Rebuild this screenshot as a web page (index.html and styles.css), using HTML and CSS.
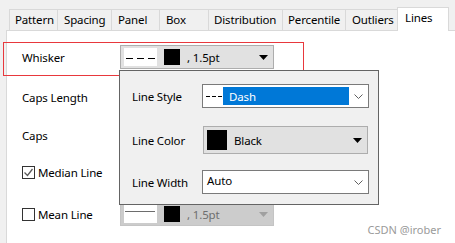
FILE: index.html
```html
<!DOCTYPE html>
<html lang="en">

<head>
    <meta charset="UTF-8">
    <title>Box Chart - Lines</title>
    <link rel="stylesheet" href="styles.css">
</head>

<body>
    <div class="window">
        <div class="tabs">
            <div class="tab tab-pattern">Pattern</div>
            <div class="tab tab-spacing">Spacing</div>
            <div class="tab tab-panel">Panel</div>
            <div class="tab tab-box">Box</div>
            <div class="tab tab-distribution">Distribution</div>
            <div class="tab tab-percentile">Percentile</div>
            <div class="tab tab-outliers">Outliers</div>
            <div class="tab tab-lines active">Lines</div>
        </div>

        <div class="panel">
            <!-- Whisker row, marked with the red box -->
            <div class="row row-whisker">
                <span class="label">Whisker</span>
                <div class="combo line-combo">
                    <span class="sample">
                        <svg width="33" height="18"><line x1="2" y1="10.5" x2="31" y2="10.5" stroke="#000" stroke-width="1" stroke-dasharray="7 4" /></svg>
                    </span>
                    <span class="swatch"></span>
                    <span class="combo-text">, 1.5pt</span>
                    <svg class="tri" width="9" height="5"><polygon points="0,0 9,0 4.5,5" fill="#000" /></svg>
                </div>
            </div>

            <div class="row row-caps-length">
                <span class="label">Caps Length</span>
            </div>

            <div class="row row-caps">
                <span class="label">Caps</span>
            </div>

            <div class="row row-median">
                <label class="check">
                    <span class="box">
                        <svg width="11" height="11"><polyline points="1.5,5.5 4.5,8.5 9.5,2" fill="none" stroke="#5a5a5a" stroke-width="1.3" /></svg>
                    </span>
                    Median Line
                </label>
            </div>

            <div class="row row-mean">
                <label class="check">
                    <span class="box"></span>
                    Mean Line
                </label>
                <div class="combo line-combo disabled">
                    <span class="sample">
                        <svg width="32" height="18"><line x1="1" y1="6.5" x2="31" y2="6.5" stroke="#6d6d6d" stroke-width="1" /></svg>
                    </span>
                    <span class="swatch"></span>
                    <span class="combo-text">, 1.5pt</span>
                    <svg class="tri" width="9" height="5"><polygon points="0,0 9,0 4.5,5" fill="#a0a0a0" /></svg>
                </div>
            </div>
        </div>

        <!-- Drop-down editor opened from the Whisker combo -->
        <div class="popup">
            <div class="popup-row row-style">
                <span class="label">Line Style</span>
                <div class="field">
                    <div class="selected">
                        <span class="mini-sample">
                            <svg width="18" height="18"><line x1="1" y1="9.5" x2="17" y2="9.5" stroke="#000" stroke-width="1" stroke-dasharray="4 2" /></svg>
                        </span>
                        <span>Dash</span>
                    </div>
                    <svg class="chevron" width="9" height="5"><polyline points="0.5,0.5 4.5,4.5 8.5,0.5" fill="none" stroke="#606060" stroke-width="1" /></svg>
                </div>
            </div>

            <div class="popup-row row-color">
                <span class="label">Line Color</span>
                <div class="combo color-combo">
                    <span class="swatch big"></span>
                    <span class="combo-text">Black</span>
                    <svg class="tri" width="9" height="5"><polygon points="0,0 9,0 4.5,5" fill="#000" /></svg>
                </div>
            </div>

            <div class="popup-row row-width">
                <span class="label">Line Width</span>
                <div class="field">
                    <span class="field-text">Auto</span>
                    <svg class="chevron" width="9" height="5"><polyline points="0.5,0.5 4.5,4.5 8.5,0.5" fill="none" stroke="#606060" stroke-width="1" /></svg>
                </div>
            </div>
        </div>

        <div class="watermark">CSDN @irober</div>
    </div>
</body>

</html>
```

FILE: styles.css
```css
* {
    box-sizing: border-box;
}

body {
    margin: 0;
    background-color: #f0f0f0;
    font-family: "Noto Sans", "Open Sans", Arial, sans-serif;
    font-size: 11.5px;
    letter-spacing: -0.15px;
    color: #000;
}

.window {
    position: relative;
    width: 455px;
    height: 243px;
    overflow: hidden;
}

/* tab strip */

.tabs {
    display: flex;
    align-items: flex-end;
    height: 30px;
    padding-left: 9px;
}

.tab {
    height: 21px;
    border: 1px solid #d9d9d9;
    border-bottom: none;
    margin-right: -1px;
    padding-left: 5px;
    line-height: 20px;
    white-space: nowrap;
}

.tab-pattern { width: 49px; }
.tab-spacing { width: 55px; padding-left: 6px; }
.tab-panel { width: 49px; padding-left: 6px; }
.tab-box { width: 50px; padding-left: 6px; }
.tab-distribution { width: 75px; }
.tab-percentile { width: 64px; }
.tab-outliers { width: 53px; padding-left: 6px; }

.tab.active {
    position: relative;
    z-index: 1;
    width: 52px;
    height: 24px;
    margin-bottom: -1px;
    padding-left: 7px;
    background-color: #fff;
    line-height: 20px;
}

/* page body */

.panel {
    display: grid;
    grid-template-rows: 32px 46px 30px 44px 40px;
    height: 213px;
    margin-left: 6px;
    padding: 11px 0 0 15px;
    background-color: #fff;
    border-top: 1px solid #d9d9d9;
    border-left: 1px solid #d9d9d9;
}

.row {
    position: relative;
    display: flex;
    align-items: center;
}

.label {
    width: 98px;
    flex-shrink: 0;
}

.row-whisker {
    align-items: flex-start;
}

.row-whisker .label {
    margin-top: 8px;
}

.row-whisker .combo {
    margin-top: 3px;
}

.row-whisker::before {
    content: "";
    position: absolute;
    left: -19px;
    top: 0;
    width: 299px;
    height: 32px;
    border: 1px solid #e8383d;
}

.check {
    display: flex;
    align-items: center;
    width: 98px;
}

.box {
    display: flex;
    align-items: center;
    justify-content: center;
    width: 13px;
    height: 13px;
    margin-right: 3px;
    border: 1px solid #333;
    background-color: #fff;
}

/* combos */

.combo {
    display: flex;
    align-items: center;
    background-color: #e1e1e1;
    border: 1px solid #adadad;
}

.line-combo {
    width: 154px;
    height: 24px;
    padding: 0 5px 0 3px;
}

.sample {
    display: flex;
    width: 33px;
    height: 18px;
    background-color: #fff;
}

.swatch {
    width: 16px;
    height: 16px;
    margin-left: 7px;
    background-color: #000;
}

.combo-text {
    margin-left: 7px;
}

.tri {
    margin-left: auto;
}

.combo.disabled {
    background-color: #cccccc;
    border-color: #c4c4c4;
    color: #6e6e6e;
}

/* popup editor */

.popup {
    position: absolute;
    z-index: 2;
    left: 119px;
    top: 70px;
    width: 260px;
    height: 135px;
    padding: 13px 0 0 12px;
    background-color: #f0f0f0;
    border: 1px solid #646464;
}

.popup-row {
    display: flex;
    align-items: center;
}

.popup-row .label {
    width: 70px;
}

.row-color {
    margin-top: 18px;
}

.row-width {
    margin-top: 16px;
}

.field {
    display: flex;
    align-items: center;
    width: 167px;
    height: 24px;
    padding: 2px 5px 2px 2px;
    background-color: #fff;
    border: 1px solid #7a7a7a;
}

.selected {
    display: flex;
    align-items: center;
    width: 144px;
    height: 18px;
    background-color: #0078d7;
    color: #fff;
}

.mini-sample {
    display: flex;
    width: 18px;
    height: 18px;
    margin-right: 6px;
    background-color: #fff;
}

.chevron {
    margin-left: auto;
}

.field-text {
    margin: -3px 0 0 2px;
}

.color-combo {
    width: 165px;
    height: 28px;
    margin-left: 1px;
    padding: 0 5px 0 3px;
}

.swatch.big {
    width: 20px;
    height: 20px;
    margin-left: 0;
}

/* watermark */

.watermark {
    position: absolute;
    right: 14px;
    bottom: 6px;
    font-size: 11px;
    letter-spacing: 0;
    color: #9a9a9a;
}
```
